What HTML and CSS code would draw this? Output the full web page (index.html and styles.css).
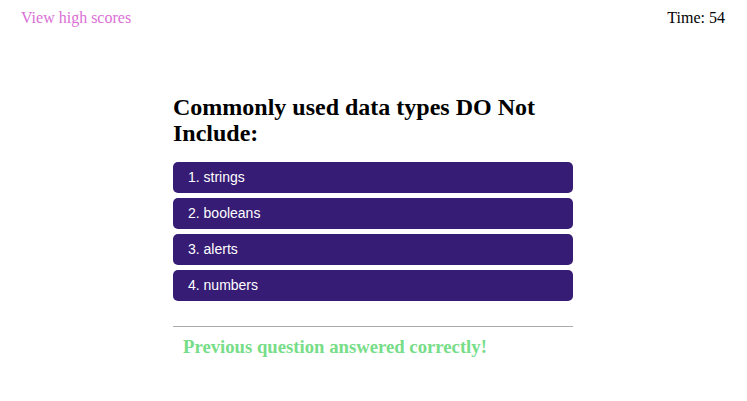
FILE: index.html
```html
<!DOCTYPE html>
<html>
<head>
<meta charset="utf-8">
<link rel="stylesheet" href="styles.css">
</head>
<body>
<header class="top">
  <a class="scores" href="#">View high scores</a>
  <span class="timer">Time: 54</span>
</header>
<main class="quiz">
  <h2 class="question">Commonly used data types DO Not Include:</h2>
  <div class="choices">
    <button class="choice">1. strings</button>
    <button class="choice">2. booleans</button>
    <button class="choice">3. alerts</button>
    <button class="choice">4. numbers</button>
  </div>
  <hr class="divider">
  <h3 class="result">Previous question answered correctly!</h3>
</main>
</body>
</html>
```
FILE: styles.css
```css
body {
  margin: 0;
  font-family: "Liberation Serif", "Times New Roman", serif;
  font-size: 16px;
  color: #000;
  background: #fff;
}
.top {
  display: flex;
  justify-content: space-between;
  padding: 9px 22px 0 21px;
  line-height: 18px;
}
.scores {
  color: #da70d6;
  text-decoration: none;
}
.quiz {
  width: 400px;
  margin: 67px 0 0 calc(50% - 200.5px);
}
.question {
  font-size: 24px;
  font-weight: bold;
  line-height: 26px;
  margin: 0 0 16px;
}
.choices {
  display: flex;
  flex-direction: column;
  gap: 5px;
}
.choice {
  height: 31px;
  border: none;
  border-radius: 5px;
  background: #361c74;
  color: #fff;
  font-family: "Liberation Sans", Arial, sans-serif;
  font-size: 14px;
  text-align: left;
  padding: 0 15px 1px;
}
.divider {
  border: none;
  border-top: 1px solid #aaa;
  margin: 25px 0 0;
}
.result {
  margin: 9px 0 0 10px;
  font-size: 18.72px;
  line-height: 22px;
  font-weight: bold;
  color: #77dd88;
}
```
